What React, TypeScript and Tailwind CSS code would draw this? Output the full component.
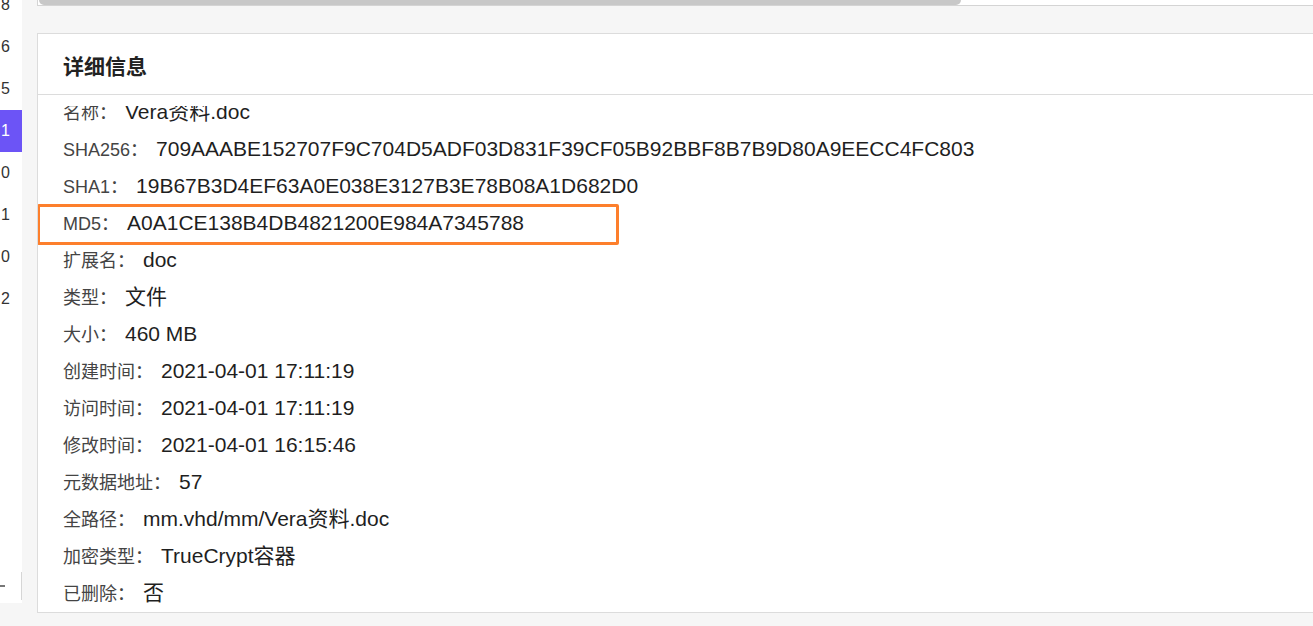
import React from "react";

type Row = {
  label: string;
  value: string;
  marked?: boolean;
};

const rows: Row[] = [
  { label: "名称", value: "Vera资料.doc" },
  { label: "SHA256", value: "709AAABE152707F9C704D5ADF03D831F39CF05B92BBF8B7B9D80A9EECC4FC803" },
  { label: "SHA1", value: "19B67B3D4EF63A0E038E3127B3E78B08A1D682D0" },
  { label: "MD5", value: "A0A1CE138B4DB4821200E984A7345788", marked: true },
  { label: "扩展名", value: "doc" },
  { label: "类型", value: "文件" },
  { label: "大小", value: "460 MB" },
  { label: "创建时间", value: "2021-04-01 17:11:19" },
  { label: "访问时间", value: "2021-04-01 17:11:19" },
  { label: "修改时间", value: "2021-04-01 16:15:46" },
  { label: "元数据地址", value: "57" },
  { label: "全路径", value: "mm.vhd/mm/Vera资料.doc" },
  { label: "加密类型", value: "TrueCrypt容器" },
  { label: "已删除", value: "否" },
];

const sideNums = ["8", "6", "5", "1", "0", "1", "0", "2"];

export default function App() {
  return (
    <div
      className="flex h-screen w-full overflow-hidden bg-[#f6f6f6]"
      style={{ fontFamily: '"Liberation Sans", "Noto Sans CJK SC", sans-serif' }}
    >
      {/* left index strip */}
      <div className="flex h-[603px] w-[22px] shrink-0 flex-col bg-white">
        <div className="-mt-[16px]">
          {sideNums.map((n, i) => (
            <div
              key={i}
              className={`flex h-[42px] items-center pl-[1px] text-[16px] ${
                i === 3 ? "bg-[#6c54f6] text-white" : "text-[#333]"
              }`}
            >
              {n}
            </div>
          ))}
        </div>
        <div className="mt-auto mb-[3px] flex h-[28px] items-center justify-between">
          <div className="h-[2px] w-[5px] bg-[#777]" />
          <div className="h-full w-px bg-[#d6d6d6]" />
        </div>
      </div>

      {/* main */}
      <div className="ml-[15px] flex min-w-0 flex-1 flex-col">
        {/* top panel with scrollbar */}
        <div className="h-[6px] shrink-0 border-b border-l border-[#d4d4d4] bg-white">
          <div className="ml-[1px] h-[5px] w-[922px] rounded-b-[5px] bg-[#c8c8c8]" />
        </div>

        {/* details card */}
        <div className="mt-[27px] flex h-[580px] shrink-0 flex-col border border-r-0 border-[#dcdcdc] bg-white">
          <div className="flex h-[61px] shrink-0 items-center border-b border-[#dcdcdc] px-[25px] pt-[5px]">
            <span className="text-[21px] font-bold text-[#222]">详细信息</span>
          </div>
          <div className="mt-[11px] min-h-0 flex-1 overflow-hidden">
            <div className="-mt-[13px] px-[25px]">
              {rows.map((r) => (
                <div key={r.label} className="relative h-[37px] whitespace-nowrap leading-[37px]">
                  <span className="text-[18px] text-[#444]">{r.label}：</span>
                  <span className="ml-2 text-[21px] text-[#1f1f1f]">{r.value}</span>
                  {r.marked && (
                    <div className="absolute -left-[26px] top-0 h-[41px] w-[582px] rounded-[2px] border-[3px] border-[#fd7f2c]" />
                  )}
                </div>
              ))}
            </div>
          </div>
        </div>
      </div>
    </div>
  );
}
